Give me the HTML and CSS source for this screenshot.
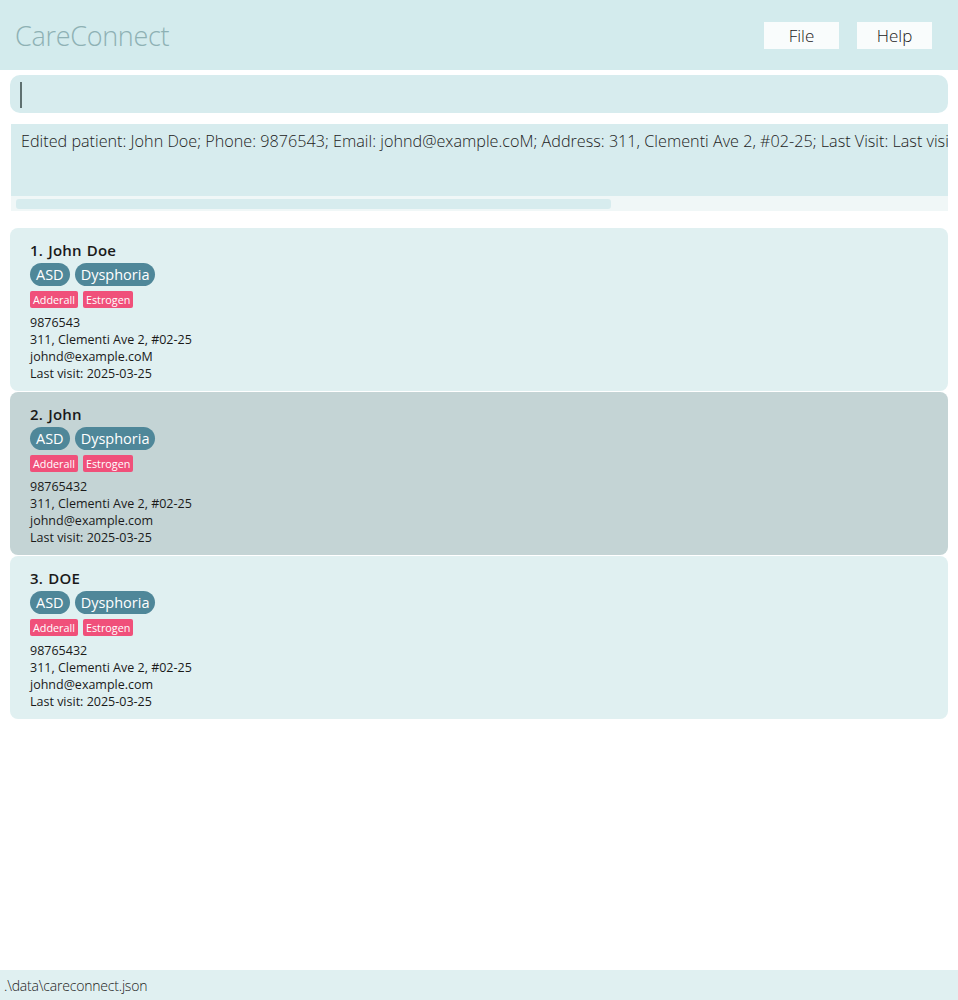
FILE: index.html
```html
<!DOCTYPE html>
<html>
<head>
<meta charset="utf-8">
<link rel="stylesheet" href="styles.css">
</head>
<body>
<div class="app">
  <header class="topbar">
    <div class="title">CareConnect</div>
    <div class="menus">
      <button class="menu-btn">File</button>
      <button class="menu-btn">Help</button>
    </div>
  </header>
  <div class="command"><span class="caret"></span></div>
  <div class="result">
    <div class="result-text">Edited patient: John Doe; Phone: 9876543; Email: johnd@example.coM; Address: 311, Clementi Ave 2, #02-25; Last Visit: Last visi</div>
    <div class="hscroll"><div class="thumb"></div></div>
  </div>
  <div class="list">
    <div class="card">
      <div class="name">1. John Doe</div>
      <div class="tags"><span class="tag">ASD</span><span class="tag">Dysphoria</span></div>
      <div class="meds"><span class="med">Adderall</span><span class="med">Estrogen</span></div>
      <div class="info">9876543</div>
      <div class="info">311, Clementi Ave 2, #02-25</div>
      <div class="info">johnd@example.coM</div>
      <div class="info">Last visit: 2025-03-25</div>
    </div>
    <div class="card selected">
      <div class="name">2. John</div>
      <div class="tags"><span class="tag">ASD</span><span class="tag">Dysphoria</span></div>
      <div class="meds"><span class="med">Adderall</span><span class="med">Estrogen</span></div>
      <div class="info">98765432</div>
      <div class="info">311, Clementi Ave 2, #02-25</div>
      <div class="info">johnd@example.com</div>
      <div class="info">Last visit: 2025-03-25</div>
    </div>
    <div class="card">
      <div class="name">3. DOE</div>
      <div class="tags"><span class="tag">ASD</span><span class="tag">Dysphoria</span></div>
      <div class="meds"><span class="med">Adderall</span><span class="med">Estrogen</span></div>
      <div class="info">98765432</div>
      <div class="info">311, Clementi Ave 2, #02-25</div>
      <div class="info">johnd@example.com</div>
      <div class="info">Last visit: 2025-03-25</div>
    </div>
  </div>
  <footer class="status">.\data\careconnect.json</footer>
</div>
</body>
</html>
```

FILE: styles.css
```css
html, body {
  margin: 0;
  padding: 0;
  background: #ffffff;
}
body {
  font-family: "Open Sans", "Noto Sans", sans-serif;
  color: #111;
}
.app {
  width: 958px;
  height: 1000px;
  display: flex;
  flex-direction: column;
  overflow: hidden;
}
.topbar {
  height: 70px;
  background: #d3ebed;
  display: flex;
  align-items: center;
  justify-content: space-between;
  padding: 0 26px 0 15px;
  box-sizing: border-box;
  flex-shrink: 0;
}
.title {
  font-size: 27px;
  font-weight: 300;
  color: #8eb1b4;
  letter-spacing: -0.3px;
  margin-top: 1px;
}
.menus {
  display: flex;
  gap: 18px;
}
.menu-btn {
  width: 75px;
  height: 27px;
  background: #f9fcfc;
  border: none;
  font-family: "Open Sans", sans-serif;
  font-weight: 300;
  font-size: 17px;
  color: #1a1a1a;
  padding: 0;
}
.command {
  margin: 5px 10px 0 10px;
  height: 38px;
  background: #d7ecee;
  border-radius: 10px;
  display: flex;
  align-items: center;
  padding-left: 10px;
  flex-shrink: 0;
}
.caret {
  width: 2px;
  height: 26px;
  background: #5f7070;
  margin-top: 2px;
}
.result {
  margin: 11px 10px 0 11px;
  flex-shrink: 0;
  overflow: hidden;
}
.result-text {
  height: 72px;
  background: #d7ecee;
  padding: 6px 0 0 10px;
  box-sizing: border-box;
  white-space: nowrap;
  overflow: hidden;
  font-size: 16.2px;
  font-weight: 300;
  letter-spacing: 0;
  color: #222;
}
.hscroll {
  height: 15px;
  background: #f0f7f7;
  padding: 3px 0 0 5px;
  box-sizing: border-box;
}
.thumb {
  width: 595px;
  height: 10px;
  background: #d7ecee;
  border-radius: 3px;
}
.list {
  margin: 17px 10px 0 10px;
  display: flex;
  flex-direction: column;
  gap: 1px;
  flex: 1;
}
.card {
  height: 163px;
  background: #e0f0f1;
  border-radius: 8px;
  padding: 12px 20px 0 20px;
  box-sizing: border-box;
  display: flex;
  flex-direction: column;
  font-family: "Open Sans", sans-serif;
}
.card.selected {
  background: #c4d4d5;
}
.name {
  font-size: 15px;
  font-weight: 600;
  color: #1a1a1a;
  line-height: 20px;
  letter-spacing: 0.2px;
  word-spacing: 1px;
}
.tags {
  display: flex;
  gap: 5px;
  margin-top: 3px;
}
.tag {
  background: #4f8799;
  color: #fff;
  font-size: 14.5px;
  line-height: 23px;
  height: 23px;
  padding: 0 6px;
  border-radius: 12px;
  letter-spacing: 0;
}
.meds {
  display: flex;
  gap: 5px;
  margin-top: 5px;
  margin-bottom: 6px;
}
.med {
  background: #f0507a;
  color: #fff;
  font-size: 10.8px;
  line-height: 17px;
  height: 17px;
  padding: 0 3px;
  border-radius: 2px;
}
.info {
  font-size: 12.5px;
  line-height: 17px;
  color: #1a1a1a;
  letter-spacing: 0;
}
.status {
  height: 30px;
  background: #e0f0f1;
  flex-shrink: 0;
  font-size: 14px;
  font-weight: 300;
  line-height: 32px;
  padding-left: 4px;
  color: #222;
  letter-spacing: -0.2px;
}
```
